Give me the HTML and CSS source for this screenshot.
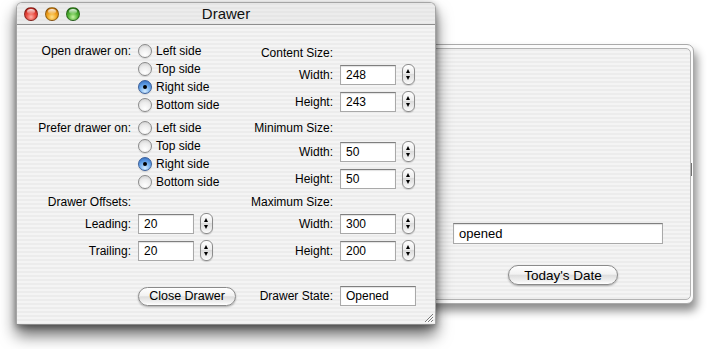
FILE: index.html
```html
<!DOCTYPE html>
<html lang="en">
  <head>
    <meta charset="UTF-8" />
    <title>Drawer</title>
    <link rel="stylesheet" href="styles.css">
  </head>
  <body>
    <div class="stage">
      <!-- main window -->
      <div class="window">
        <div class="titlebar">
          <div class="lights">
            <span class="light light-close"></span>
            <span class="light light-min"></span>
            <span class="light light-zoom"></span>
          </div>
          <div class="title">Drawer</div>
          <div></div>
        </div>

        <div class="content">
          <!-- left column -->
          <div class="panel panel-left">
            <div class="row group">
              <div class="lbl">Open drawer on:</div>
              <div class="radios">
                <div class="radio"><span class="mark"></span>Left side</div>
                <div class="radio"><span class="mark"></span>Top side</div>
                <div class="radio on"><span class="mark"></span>Right side</div>
                <div class="radio"><span class="mark"></span>Bottom side</div>
              </div>
            </div>
            <div class="row group mt5">
              <div class="lbl">Prefer drawer on:</div>
              <div class="radios">
                <div class="radio"><span class="mark"></span>Left side</div>
                <div class="radio"><span class="mark"></span>Top side</div>
                <div class="radio on"><span class="mark"></span>Right side</div>
                <div class="radio"><span class="mark"></span>Bottom side</div>
              </div>
            </div>
            <div class="row head mt2">
              <div class="lbl">Drawer Offsets:</div>
            </div>
            <div class="row mt2">
              <div class="lbl">Leading:</div>
              <div class="ctl"><span class="field">20</span><span class="stepper"></span></div>
            </div>
            <div class="row mt7">
              <div class="lbl">Trailing:</div>
              <div class="ctl"><span class="field">20</span><span class="stepper"></span></div>
            </div>
            <div class="row mt26">
              <div></div>
              <div class="ctl"><span class="btn btn-close">Close Drawer</span></div>
            </div>
          </div>

          <!-- right column -->
          <div class="panel panel-right">
            <div class="row head">
              <div class="lbl">Content Size:</div>
            </div>
            <div class="row mt2">
              <div class="lbl">Width:</div>
              <div class="ctl"><span class="field">248</span><span class="stepper"></span></div>
            </div>
            <div class="row mt7">
              <div class="lbl">Height:</div>
              <div class="ctl"><span class="field">243</span><span class="stepper"></span></div>
            </div>
            <div class="row head mt8">
              <div class="lbl">Minimum Size:</div>
            </div>
            <div class="row mt4">
              <div class="lbl">Width:</div>
              <div class="ctl"><span class="field">50</span><span class="stepper"></span></div>
            </div>
            <div class="row mt7">
              <div class="lbl">Height:</div>
              <div class="ctl"><span class="field">50</span><span class="stepper"></span></div>
            </div>
            <div class="row head mt5">
              <div class="lbl">Maximum Size:</div>
            </div>
            <div class="row mt2">
              <div class="lbl">Width:</div>
              <div class="ctl"><span class="field">300</span><span class="stepper"></span></div>
            </div>
            <div class="row mt7">
              <div class="lbl">Height:</div>
              <div class="ctl"><span class="field">200</span><span class="stepper"></span></div>
            </div>
            <div class="row mt26">
              <div class="lbl">Drawer State:</div>
              <div class="ctl"><span class="field field-state">Opened</span></div>
            </div>
          </div>
        </div>

        <!-- resize grip -->
        <svg class="grip" width="11" height="11" viewBox="0 0 11 11">
          <path d="M10 2 L2 10 M10 5 L5 10 M10 8 L8 10" stroke="#7a7a7a" stroke-width="1" />
          <path d="M10.5 3 L3 10.5 M10.5 6 L6 10.5 M10.5 9 L9 10.5" stroke="#ffffff" stroke-width="1" />
        </svg>
      </div>

      <!-- drawer -->
      <div class="drawer">
        <div class="drawer-inner">
          <span class="field field-wide">opened</span>
          <span class="btn btn-date">Today's Date</span>
        </div>
        <span class="drawer-handle"></span>
      </div>
    </div>
  </body>
</html>
```

FILE: styles.css
```css
* {
  margin: 0;
  padding: 0;
  box-sizing: border-box;
}

body {
  width: 711px;
  height: 349px;
  overflow: hidden;
  background-color: #fff;
  font-family: "Liberation Sans", Arial, sans-serif;
  font-size: 12px;
  color: #000;
}

.stage {
  display: flex;
  align-items: flex-start;
  padding: 2px 0 0 16px;
}

/* 窗口 */
.window {
  position: relative;
  z-index: 2;
  width: 420px;
  height: 323px;
  display: flex;
  flex-direction: column;
  border: 1px solid #a5a5a5;
  border-bottom-color: #8a8a8a;
  border-radius: 6px 6px 0 0;
  background: repeating-linear-gradient(#ececec 0, #ececec 2px, #f4f4f4 2px, #f4f4f4 4px);
  box-shadow: 0 10px 16px rgba(0, 0, 0, 0.6), 0 2px 6px rgba(0, 0, 0, 0.35);
}

.titlebar {
  height: 22px;
  display: grid;
  grid-template-columns: 1fr auto 1fr;
  align-items: center;
  border-bottom: 1px solid #8e8e8e;
  border-radius: 5px 5px 0 0;
  background: repeating-linear-gradient(#e6e6e6 0, #e6e6e6 2px, #ececec 2px, #ececec 4px);
}

.lights {
  display: flex;
  gap: 7px;
  padding: 1px 0 0 7px;
}

.light {
  position: relative;
  width: 14px;
  height: 14px;
  border-radius: 50%;
  border: 1px solid rgba(0, 0, 0, 0.35);
}

/* 高光 */
.light::before {
  content: "";
  position: absolute;
  left: 2px;
  top: 1px;
  width: 8px;
  height: 5px;
  border-radius: 50%;
  background: linear-gradient(rgba(255, 255, 255, 0.9), rgba(255, 255, 255, 0.1));
}

.light-close {
  background: radial-gradient(circle at 50% 75%, #ffb1a6 0, #e8463c 45%, #a3150f 100%);
}

.light-min {
  background: radial-gradient(circle at 50% 75%, #ffe28a 0, #f0a21c 45%, #b0600a 100%);
}

.light-zoom {
  background: radial-gradient(circle at 50% 75%, #c7f3a4 0, #4fb233 45%, #1f6e12 100%);
}

.title {
  font-size: 15px;
  color: #111;
  line-height: 21px;
}

.content {
  flex: 1;
  display: flex;
}

.panel {
  display: flex;
  flex-direction: column;
}

.panel-left {
  width: 228px;
  padding-top: 17px;
  --lw: 114px;
}

.panel-right {
  padding-top: 19px;
  --lw: 88px;
}

.row {
  display: grid;
  grid-template-columns: var(--lw) auto;
  column-gap: 7px;
  align-items: center;
  height: 20px;
}

.row.head {
  height: 18px;
}

.row.group {
  height: auto;
  align-items: start;
}

.lbl {
  text-align: right;
  line-height: 18px;
  white-space: nowrap;
}

.ctl {
  display: flex;
  align-items: center;
  gap: 6px;
}

.mt2 { margin-top: 2px; }
.mt4 { margin-top: 4px; }
.mt5 { margin-top: 5px; }
.mt7 { margin-top: 7px; }
.mt8 { margin-top: 8px; }
.mt26 { margin-top: 26px; }

/* 单选按钮 */
.radio {
  height: 18px;
  display: flex;
  align-items: center;
  gap: 4px;
  white-space: nowrap;
}

.mark {
  position: relative;
  width: 14px;
  height: 14px;
  border-radius: 50%;
  border: 1px solid #8a8a8a;
  background: radial-gradient(circle at 50% 80%, #ffffff 0, #ececec 55%, #c9c9c9 100%);
  box-shadow: 0 1px 1px rgba(0, 0, 0, 0.12);
}

.radio.on .mark {
  border-color: #3a5f9a;
  background: radial-gradient(circle at 50% 85%, #d4ecff 0, #6aa8ec 50%, #2a63b8 100%);
}

.radio.on .mark::after {
  content: "";
  position: absolute;
  left: 4px;
  top: 4px;
  width: 4px;
  height: 4px;
  border-radius: 50%;
  background-color: #000;
}

/* 文本框 */
.field {
  width: 56px;
  height: 20px;
  padding-left: 5px;
  line-height: 18px;
  background-color: #fff;
  border: 1px solid #a9a9a9;
  border-top-color: #7f7f7f;
  box-shadow: inset 0 1px 1px rgba(0, 0, 0, 0.12);
}

.field-state {
  width: 76px;
}

/* 步进器 */
.stepper {
  position: relative;
  width: 13px;
  height: 21px;
  border: 1px solid #8c8c8c;
  border-radius: 6px;
  background: linear-gradient(#ffffff, #ededed 45%, #dcdcdc 50%, #f4f4f4 90%, #ffffff);
  box-shadow: 0 1px 1px rgba(0, 0, 0, 0.15);
}

.stepper::before,
.stepper::after {
  content: "";
  position: absolute;
  left: 3px;
  border-left: 2.5px solid transparent;
  border-right: 2.5px solid transparent;
}

.stepper::before {
  top: 4px;
  border-bottom: 4px solid #000;
}

.stepper::after {
  bottom: 4px;
  border-top: 4px solid #000;
}

/* 按钮 */
.btn {
  display: flex;
  align-items: center;
  justify-content: center;
  height: 19px;
  border: 1px solid #8a8a8a;
  border-radius: 10px;
  background: linear-gradient(#ffffff, #f2f2f2 45%, #dedede 52%, #f2f2f2 85%, #ffffff);
  box-shadow: 0 1px 2px rgba(0, 0, 0, 0.3);
  font-size: 12.5px;
  white-space: nowrap;
}

.btn-close {
  width: 98px;
}

.grip {
  position: absolute;
  right: 1px;
  bottom: 1px;
}

/* 抽屉 */
.drawer {
  position: relative;
  z-index: 1;
  width: 268px;
  height: 260px;
  margin: 42px 0 0 -10px;
  padding: 3px 2px 3px 0;
  border: 1px solid #aaaaaa;
  border-radius: 0 7px 7px 0;
  background-color: #fbfbfb;
  box-shadow: 3px 7px 10px rgba(0, 0, 0, 0.45);
}

.drawer-inner {
  height: 100%;
  display: flex;
  flex-direction: column;
  justify-content: flex-end;
  align-items: flex-start;
  padding: 0 0 14px 25px;
  border: 1px solid #b3b3b3;
  border-radius: 0 5px 5px 0;
  background: repeating-linear-gradient(#ececec 0, #ececec 2px, #f4f4f4 2px, #f4f4f4 4px);
}

.field-wide {
  width: 210px;
  height: 21px;
  line-height: 19px;
  font-size: 13px;
}

.btn-date {
  width: 110px;
  height: 20px;
  margin: 21px 0 0 55px;
  font-size: 13.5px;
}

.drawer-handle {
  position: absolute;
  right: 1px;
  top: 118px;
  width: 1px;
  height: 13px;
  background-color: #707070;
}
```
